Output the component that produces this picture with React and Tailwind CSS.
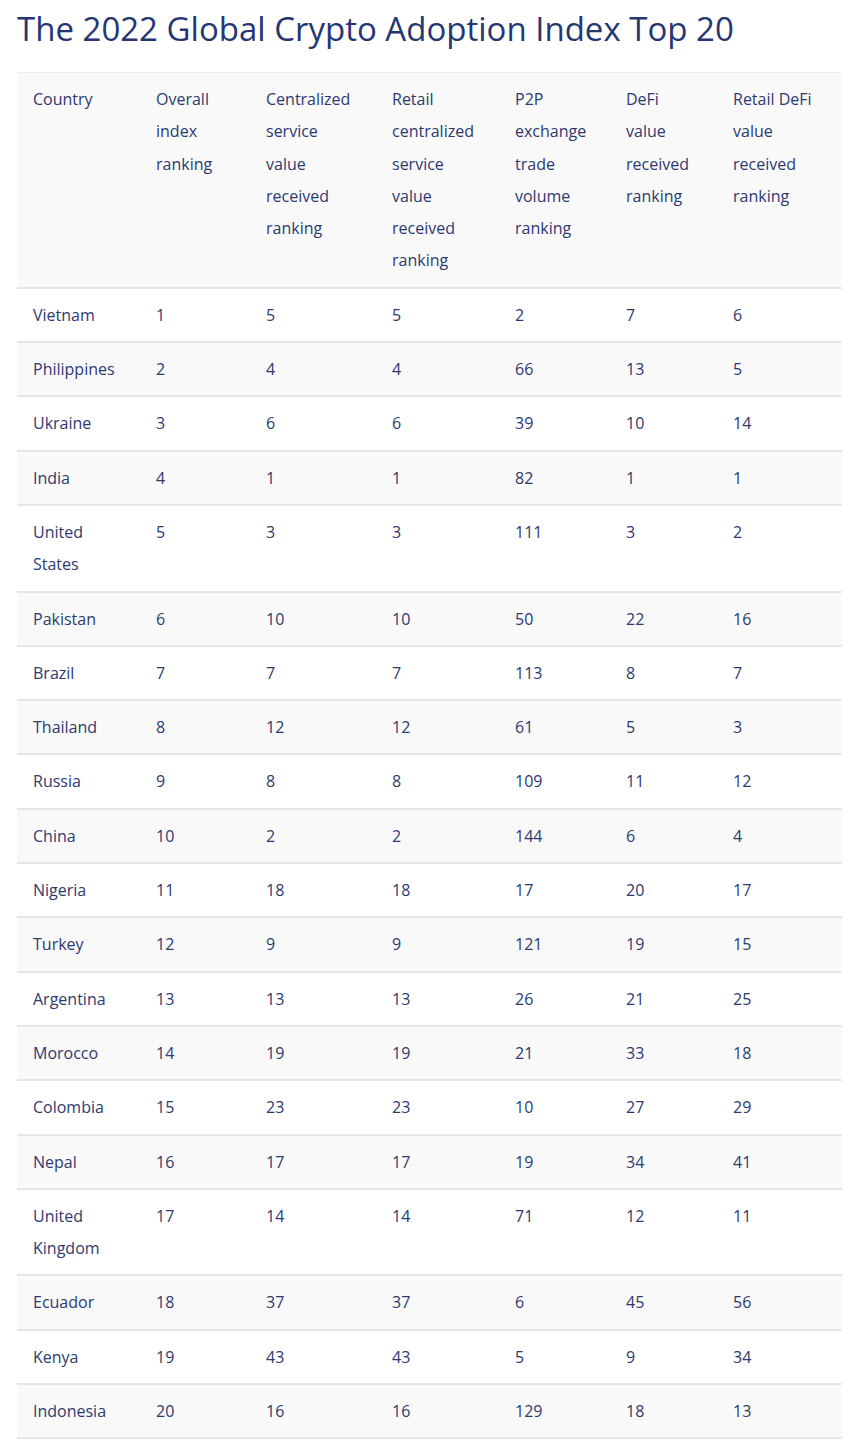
import React from "react";

const headers = [
  "Country",
  "Overall index ranking",
  "Centralized service value received ranking",
  "Retail centralized service value received ranking",
  "P2P exchange trade volume ranking",
  "DeFi value received ranking",
  "Retail DeFi value received ranking",
];

// col widths measured off the reference (total 825)
const widths = ["w-[123px]", "w-[110px]", "w-[126px]", "w-[123px]", "w-[111px]", "w-[107px]", "w-[125px]"];

const rows = [
  ["Vietnam", 1, 5, 5, 2, 7, 6],
  ["Philippines", 2, 4, 4, 66, 13, 5],
  ["Ukraine", 3, 6, 6, 39, 10, 14],
  ["India", 4, 1, 1, 82, 1, 1],
  ["United States", 5, 3, 3, 111, 3, 2],
  ["Pakistan", 6, 10, 10, 50, 22, 16],
  ["Brazil", 7, 7, 7, 113, 8, 7],
  ["Thailand", 8, 12, 12, 61, 5, 3],
  ["Russia", 9, 8, 8, 109, 11, 12],
  ["China", 10, 2, 2, 144, 6, 4],
  ["Nigeria", 11, 18, 18, 17, 20, 17],
  ["Turkey", 12, 9, 9, 121, 19, 15],
  ["Argentina", 13, 13, 13, 26, 21, 25],
  ["Morocco", 14, 19, 19, 21, 33, 18],
  ["Colombia", 15, 23, 23, 10, 27, 29],
  ["Nepal", 16, 17, 17, 19, 34, 41],
  ["United Kingdom", 17, 14, 14, 71, 12, 11],
  ["Ecuador", 18, 37, 37, 6, 45, 56],
  ["Kenya", 19, 43, 43, 5, 9, 34],
  ["Indonesia", 20, 16, 16, 129, 18, 13],
];

export default function App() {
  return (
    <div className="bg-white px-[17px] pt-[7px] font-['Open_Sans',sans-serif] text-[#2d3a70]">
      <h1 className="text-[33px] leading-[44px] text-[#253672] mb-[21px]">
        The 2022 Global Crypto Adoption Index Top 20
      </h1>
      <table className="w-[825px] table-fixed border-collapse text-[16px] leading-[32.3px]">
        <colgroup>
          {widths.map((w, i) => (
            <col key={i} className={w} />
          ))}
        </colgroup>
        <thead>
          <tr className="bg-[#f9f9f9] border-t border-[#ececec] border-b-2 border-b-[#e6e6e6]">
            {headers.map((h, i) => (
              <th key={i} className="text-left font-normal align-top px-4 py-[10px]">
                {h}
              </th>
            ))}
          </tr>
        </thead>
        <tbody>
          {rows.map((r, i) => (
            <tr
              key={r[0]}
              className={`border-b-2 border-[#e6e6e6] ${i % 2 === 1 ? "bg-[#f9f9f9]" : "bg-white"}`}
            >
              {r.map((c, j) => (
                <td key={j} className="align-top px-4 py-[10px]">
                  {c}
                </td>
              ))}
            </tr>
          ))}
        </tbody>
      </table>
    </div>
  );
}
